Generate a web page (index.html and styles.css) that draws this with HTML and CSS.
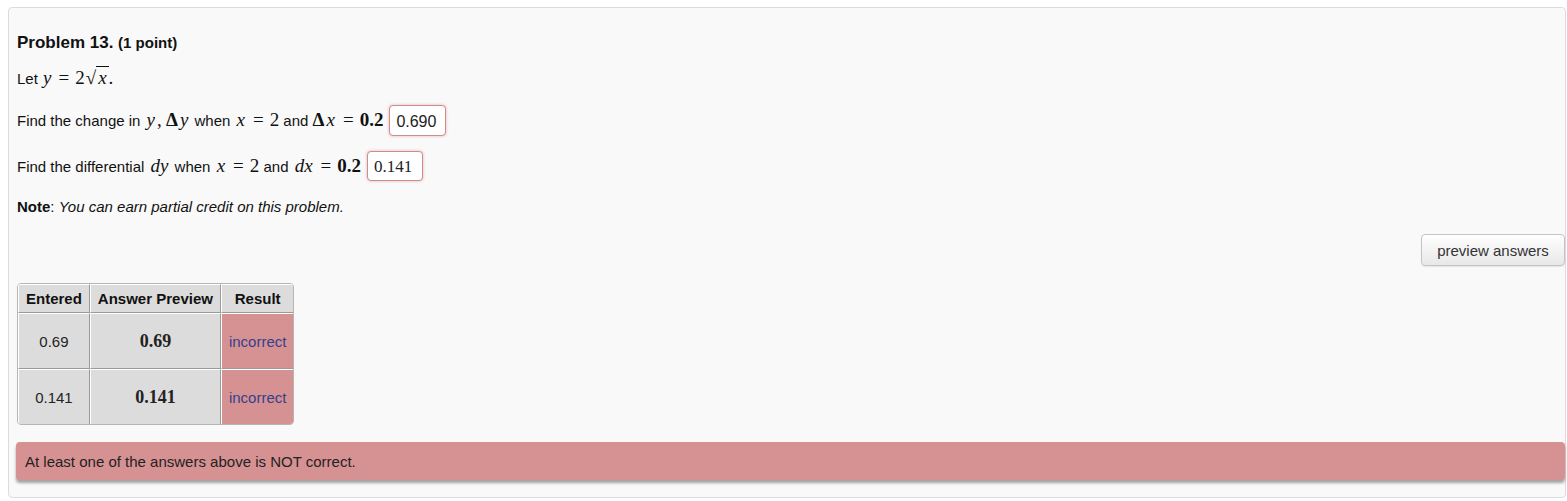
FILE: index.html
```html
<!DOCTYPE html>
<html lang="en">
<head>
    <meta charset="UTF-8">
    <meta name="viewport" content="width=device-width, initial-scale=1.0">
    <title>Problem 13</title>
    <link rel="stylesheet" href="styles.css">
</head>
<body>
    <div class="problem">
        <h3 class="problem-title">Problem 13. <span class="points">(1 point)</span></h3>
        <p class="line">Let <span class="m"><i class="tight">y</i><span class="op">=</span>2<span class="sqrt">&radic;<span class="radicand"><i class="tight">x</i></span></span>.</span></p>
        <p class="line ask">
            <span>Find the change in <span class="m"><i>y</i>,</span> <span class="m"><b>&Delta;</b><i>y</i></span> when <span class="m"><i>x</i><span class="op">=</span>2</span> and <span class="m"><b>&Delta;</b><i>x</i><span class="op">=</span><b>0.2</b></span></span>
            <input class="answer sans" type="text" value="0.690">
        </p>
        <p class="line ask">
            <span>Find the differential <span class="m"><i>dy</i></span> when <span class="m"><i>x</i><span class="op">=</span>2</span> and <span class="m"><i>dx</i><span class="op">=</span><b>0.2</b></span></span>
            <input class="answer serif" type="text" value="0.141">
        </p>
        <p class="note"><b>Note</b>: <em>You can earn partial credit on this problem.</em></p>
        <div class="actions">
            <button class="btn">preview answers</button>
        </div>
        <table class="results">
            <tr>
                <th>Entered</th>
                <th>Answer Preview</th>
                <th>Result</th>
            </tr>
            <tr>
                <td>0.69</td>
                <td class="preview">0.69</td>
                <td class="bad">incorrect</td>
            </tr>
            <tr>
                <td>0.141</td>
                <td class="preview">0.141</td>
                <td class="bad">incorrect</td>
            </tr>
        </table>
        <div class="alert">At least one of the answers above is NOT correct.</div>
    </div>
</body>
</html>
```

FILE: styles.css
```css
* {
    box-sizing: border-box;
}
body {
    margin: 0;
    background: #fff;
    font-family: "Liberation Sans", Arial, sans-serif;
    font-size: 15px;
    color: #111;
}
.problem {
    margin: 7px 1px 0 8px;
    padding: 24px 0 17px 8px;
    background: #f9f9f9;
    border: 1px solid #dcdcdc;
    border-radius: 4px;
}
.problem-title {
    margin: 0 0 14px;
    font-size: 17px;
    line-height: 22px;
    font-weight: bold;
}
.points {
    font-size: 15px;
}
.line {
    margin: 0 0 16px;
    line-height: 20px;
}
.ask {
    display: flex;
    align-items: center;
    gap: 6px;
    height: 31px;
    margin-bottom: 15px;
}
.ask + .ask {
    height: 30px;
    margin-bottom: 16px;
}
.m {
    font-family: "Liberation Serif", "Times New Roman", serif;
    font-size: 19px;
}
.m i {
    font-style: italic;
    padding: 0 2px;
}
.m i.tight {
    padding: 0 1px;
}
.m b {
    font-weight: bold;
}
.op {
    margin: 0 6px;
}
.sqrt {
    margin-left: 1px;
}
.radicand {
    border-top: 1px solid #111;
    padding: 0 1px;
}
.answer {
    width: 57px;
    height: 31px;
    padding: 2px 6px 0;
    font-size: 16px;
    color: #222;
    background: #fff;
    border: 1px solid #cf8c8c;
    border-radius: 4px;
    box-shadow: 0 0 3px rgba(200, 90, 90, 0.45);
}
.ask + .ask .answer {
    width: 56px;
    height: 30px;
}
.answer.sans {
    font-family: "Liberation Sans", Arial, sans-serif;
}
.answer.serif {
    font-family: "Liberation Serif", "Times New Roman", serif;
    font-size: 17px;
}
.note {
    margin: 0 0 17px;
    line-height: 20px;
}
.actions {
    display: flex;
    justify-content: flex-end;
    margin-bottom: 17px;
}
.btn {
    height: 32px;
    width: 144px;
    font-family: "Liberation Sans", Arial, sans-serif;
    font-size: 15px;
    color: #333;
    background: linear-gradient(#fff, #e8e8e8);
    border: 1px solid #c4c4c4;
    border-radius: 4px;
    box-shadow: 0 1px 1px rgba(0, 0, 0, 0.08);
}
.results {
    border-collapse: separate;
    border-spacing: 0;
    border: 1px solid #b5b5b5;
    border-radius: 4px;
    margin-bottom: 17px;
    background: #fff;
    overflow: hidden;
}
.results th,
.results td {
    background: #dcdcdc;
    border: 1px solid;
    border-color: #fff #9a9a9a #9a9a9a #fff;
    text-align: center;
    padding: 0 7px;
}
.results th {
    height: 29px;
    font-size: 15px;
    font-weight: bold;
    color: #111;
}
.results td {
    height: 56px;
    color: #222;
}
.results tr:last-child td {
    height: 55px;
    border-bottom: none;
}
.results .preview {
    font-family: "Liberation Serif", "Times New Roman", serif;
    font-size: 18px;
    font-weight: bold;
}
.results .bad {
    background: #d69292;
    color: #34408e;
}
.results th:last-child,
.results td:last-child {
    border-right: none;
}
.alert {
    height: 38px;
    margin-left: -1px;
    padding: 11px 9px;
    background: #d69292;
    color: #222;
    line-height: 17px;
    border-radius: 4px;
    box-shadow: 0 3px 3px rgba(0, 0, 0, 0.35);
}
```
